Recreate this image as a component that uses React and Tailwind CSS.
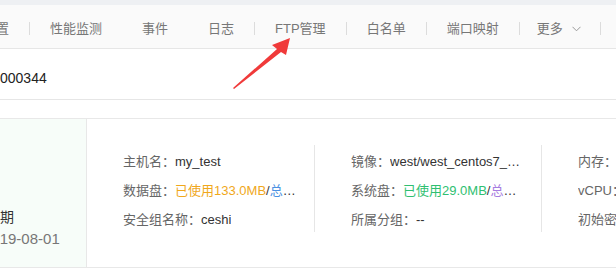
import React from 'react';

const tabs = [
    { label: '配置', sep: true },
    { label: '性能监测' },
    { label: '事件' },
    { label: '日志', sep: true },
    { label: 'FTP管理', sep: true },
    { label: '白名单', sep: true },
    { label: '端口映射', sep: true },
];

function Line({ label, children }) {
    return (
        <div className="h-[29px] flex items-center whitespace-nowrap overflow-hidden">
            <span className="text-[#666] shrink-0">{label}</span>
            <span className="truncate min-w-0">{children}</span>
        </div>
    );
}

export default function App() {
    return (
        <div className="relative w-[616px] h-[273px] overflow-hidden bg-white text-[13px] text-[#333] font-['Liberation_Sans','Noto_Sans_CJK_SC',sans-serif]">
            {/* 顶部灰条 */}
            <div className="h-[5px] bg-[#eef0f3]"></div>

            {/* 标签栏 */}
            <div className="h-[44px] bg-[#fafafa] border-b border-[#e6e6e6] flex items-center pt-[4px] ml-[-37px] text-[#777]">
                {tabs.map(t => (
                    <React.Fragment key={t.label}>
                        <span className="px-[20px] leading-none">{t.label}</span>
                        {t.sep && <span className="w-px h-[13px] bg-[#dcdcdc]"></span>}
                    </React.Fragment>
                ))}
                <span className="pl-[17px] pr-[19px] flex items-center gap-[9px] leading-none">
                    更多
                    <svg width="9" height="6" viewBox="0 0 9 6" fill="none" stroke="#999" strokeWidth="1">
                        <path d="M0.5 0.8 L4.5 4.8 L8.5 0.8" />
                    </svg>
                </span>
                <span className="w-px h-[13px] bg-[#dcdcdc]"></span>
            </div>

            {/* 实例 ID */}
            <div className="h-[51px] border-b border-[#e6e6e6] flex items-center pt-[8px] text-[14px] text-[#222]">
                <span>000344</span>
            </div>

            {/* 信息面板 */}
            <div className="mt-[18px] h-[150px] border-y border-[#e8e8e8] flex">
                <div className="w-[87px] shrink-0 bg-[#f7fdf9] border-r border-[#e8e8e8] flex flex-col justify-end pb-[17px] text-[14px] overflow-hidden whitespace-nowrap">
                    <div className="ml-[-42px] h-[22px] flex items-center text-[#333]">到期日期</div>
                    <div className="ml-[-17px] h-[22px] flex items-center text-[#777] text-[15px]">2019-08-01</div>
                </div>

                <div className="flex pt-[28px]">
                    <div className="w-[227px] shrink-0 pl-[36px] pr-[14px] h-[87px]">
                        <Line label="主机名：">my_test</Line>
                        <Line label="数据盘：">
                            <span className="text-[#f0a81c]">已使用133.0MB</span>
                            <span>/</span>
                            <span className="text-[#4a90e2]">总共10240.0MB</span>
                        </Line>
                        <Line label="安全组名称：">ceshi</Line>
                    </div>
                    <div className="w-[227px] shrink-0 pl-[36px] pr-[18px] h-[87px] border-l border-[#e6e6e6] mt-[-2px]">
                        <div className="mt-[2px]">
                            <Line label="镜像：">west/west_centos7_64bit_v2</Line>
                            <Line label="系统盘：">
                                <span className="text-[#2fbf71]">已使用29.0MB</span>
                                <span>/</span>
                                <span className="text-[#a77ce0]">总共20480.0MB</span>
                            </Line>
                            <Line label="所属分组：">--</Line>
                        </div>
                    </div>
                    <div className="w-[227px] shrink-0 pl-[36px] h-[87px] border-l border-[#e6e6e6] mt-[-2px]">
                        <div className="mt-[2px]">
                            <Line label="内存：">1024MB</Line>
                            <Line label="vCPU：">1核</Line>
                            <Line label="初始密码：">********</Line>
                        </div>
                    </div>
                </div>
            </div>

            {/* 红色箭头标注 */}
            <svg className="absolute left-0 top-0 pointer-events-none" width="616" height="273" viewBox="0 0 616 273">
                <polygon points="233,88 277,49 272,45 290,38 286,55 281,52 234,89" fill="#f03a3a" />
            </svg>
        </div>
    );
}
